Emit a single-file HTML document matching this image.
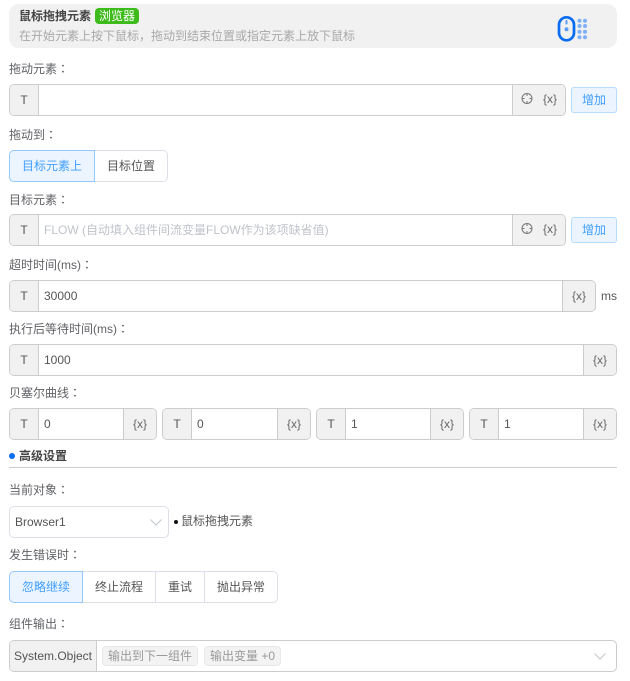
<!DOCTYPE html>
<html lang="zh">
<head>
<meta charset="utf-8">
<style>
html,body{margin:0;padding:0;background:#fff;}
body{width:630px;height:681px;position:relative;overflow:hidden;font-family:"Liberation Sans","Noto Sans CJK SC",sans-serif;font-size:12px;color:#606266;}
.a{position:absolute;box-sizing:border-box;white-space:nowrap;}
.lb{position:absolute;left:9px;height:18px;line-height:18px;font-size:12px;color:#606266;white-space:nowrap;}
.c{font-family:"Noto Sans CJK TC",sans-serif;}
.box{position:absolute;box-sizing:border-box;height:32px;border:1px solid #ccc;border-radius:5px;background:#fff;overflow:hidden;}
.t{position:absolute;left:0;top:0;bottom:0;width:28px;background:#f1f1f1;border-right:1px solid #ccc;text-align:center;line-height:30px;color:#555;font-size:12px;box-sizing:content-box;}
.v{position:absolute;left:34px;top:0;line-height:30px;font-size:12px;color:#555;white-space:nowrap;}
.x{position:absolute;right:0;top:0;bottom:0;background:#f1f1f1;border-left:1px solid #ccc;line-height:30px;font-size:12px;color:#666;text-align:center;box-sizing:border-box;width:33px;}
.seg{position:absolute;box-sizing:border-box;height:32px;border:1px solid #dcdfe6;background:#fff;text-align:center;line-height:30px;font-size:12px;color:#555;white-space:nowrap;}
.on{background:#ecf5ff;border-color:#94c7ff;color:#409eff;}
.add{position:absolute;box-sizing:border-box;left:571px;width:46px;height:26px;background:#ecf5ff;border:1px solid #b8dcff;border-radius:3px;color:#409eff;text-align:center;line-height:24px;font-size:12px;}
.tag{position:absolute;box-sizing:border-box;top:646px;height:20px;line-height:18px;background:#f3f3f3;border:1px solid #e9e9e9;border-radius:4px;color:#999;font-size:12px;text-align:center;white-space:nowrap;}
</style>
</head>
<body>
<div class="a" style="left:9px;top:4px;width:608px;height:44px;background:#f1f1f1;border-radius:10px;"></div>
<div class="a" style="left:19px;top:8px;line-height:16px;font-size:12px;font-weight:bold;color:#444;">鼠标拖拽元素</div>
<div class="a" style="left:95px;top:8px;width:44px;height:16px;background:#3dbb1b;border-radius:4px;color:#fff;font-size:12px;line-height:16px;text-align:center;">浏览器</div>
<div class="a" style="left:19px;top:28px;line-height:17px;font-size:12px;color:#a8a8a8;">在开始元素上按下鼠标，拖动到结束位置或指定元素上放下鼠标</div>
<svg class="a" style="left:556px;top:15px;" width="34" height="28" viewBox="0 0 34 28">
<rect x="3" y="2.300" width="15" height="23" rx="7.500" fill="none" stroke="#0a6cf0" stroke-width="2.700"/>
<rect x="9.500" y="5" width="2" height="4.500" rx="1" fill="#5b9bf5"/>
<circle cx="10.500" cy="14.300" r="2" fill="#5b9bf5"/>
<g fill="#7db0f7"><circle cx="23.500" cy="5.700" r="2"/><circle cx="29" cy="5.700" r="2"/><circle cx="23.500" cy="11" r="2"/><circle cx="29" cy="11" r="2"/><circle cx="23.500" cy="16.700" r="2"/><circle cx="29" cy="16.700" r="2"/><circle cx="23.500" cy="22.300" r="2"/><circle cx="29" cy="22.300" r="2"/></g>
</svg>

<div class="lb" style="top:60px;">拖动元素<span class="c" lang="zh-Hant">：</span></div>
<div class="box" style="left:9px;top:84px;width:557px;"><div class="t">T</div><div class="x" style="width:53px;"></div></div>
<svg class="a" style="left:520px;top:92px;" width="14" height="13" viewBox="0 0 14 13"><circle cx="7" cy="6.500" r="5" fill="none" stroke="#777" stroke-width="1"/><path d="M7 1.500V4M7 9V11.500M2 6.500H4.500M9.500 6.500H12" stroke="#777" stroke-width="1" fill="none"/></svg>
<div class="a" style="left:543px;top:91px;font-size:12px;line-height:16px;color:#666;">{x}</div>
<div class="add" style="top:87px;">增加</div>

<div class="lb" style="top:126px;">拖动到<span class="c" lang="zh-Hant">：</span></div>
<div class="seg on" style="left:9px;top:150px;width:86px;border-radius:5px 0 0 5px;">目标元素上</div>
<div class="seg" style="left:95px;top:150px;width:73px;border-left:0;border-radius:0 5px 5px 0;">目标位置</div>

<div class="lb" style="top:191px;">目标元素<span class="c" lang="zh-Hant">：</span></div>
<div class="box" style="left:9px;top:214px;width:557px;"><div class="t">T</div><div class="v" style="color:#bfc3ca;">FLOW (自动填入组件间流变量FLOW作为该项缺省值)</div><div class="x" style="width:53px;"></div></div>
<svg class="a" style="left:520px;top:222px;" width="14" height="13" viewBox="0 0 14 13"><circle cx="7" cy="6.500" r="5" fill="none" stroke="#777" stroke-width="1"/><path d="M7 1.500V4M7 9V11.500M2 6.500H4.500M9.500 6.500H12" stroke="#777" stroke-width="1" fill="none"/></svg>
<div class="a" style="left:543px;top:221px;font-size:12px;line-height:16px;color:#666;">{x}</div>
<div class="add" style="top:217px;">增加</div>

<div class="lb" style="top:256px;">超时时间(ms)<span class="c" lang="zh-Hant">：</span></div>
<div class="box" style="left:9px;top:280px;width:587px;"><div class="t">T</div><div class="v">30000</div><div class="x">{x}</div></div>
<div class="a" style="left:601px;top:287px;line-height:18px;font-size:12px;color:#555;">ms</div>

<div class="lb" style="top:320px;">执行后等待时间(ms)<span class="c" lang="zh-Hant">：</span></div>
<div class="box" style="left:9px;top:344px;width:608px;"><div class="t">T</div><div class="v">1000</div><div class="x">{x}</div></div>

<div class="lb" style="top:384px;">贝塞尔曲线<span class="c" lang="zh-Hant">：</span></div>
<div class="box" style="left:9px;top:408px;width:148px;"><div class="t">T</div><div class="v">0</div><div class="x">{x}</div></div>
<div class="box" style="left:162px;top:408px;width:149px;"><div class="t">T</div><div class="v">0</div><div class="x">{x}</div></div>
<div class="box" style="left:316px;top:408px;width:148px;"><div class="t">T</div><div class="v">1</div><div class="x">{x}</div></div>
<div class="box" style="left:469px;top:408px;width:148px;"><div class="t">T</div><div class="v">1</div><div class="x">{x}</div></div>

<div class="a" style="left:9px;top:453px;width:6px;height:6px;border-radius:50%;background:#0a6cf0;"></div>
<div class="a" style="left:19px;top:447px;line-height:18px;font-size:12px;font-weight:bold;color:#444;">高级设置</div>
<div class="a" style="left:9px;top:467px;width:608px;height:1px;background:#ccc;"></div>

<div class="lb" style="top:481px;">当前对象<span class="c" lang="zh-Hant">：</span></div>
<div class="a" style="left:9px;top:506px;width:160px;height:32px;border:1px solid #dcdfe6;border-radius:5px;background:#fff;"></div>
<div class="a" style="left:15px;top:514px;line-height:17px;font-size:12px;color:#555;">Browser1</div>
<svg class="a" style="left:149px;top:518px;" width="14" height="9" viewBox="0 0 14 9"><path d="M1.500 1.500L7 7L12.500 1.500" fill="none" stroke="#c0c4cc" stroke-width="1"/></svg>
<div class="a" style="left:174px;top:520px;width:4px;height:4px;border-radius:50%;background:#111;"></div>
<div class="a" style="left:181px;top:512px;line-height:18px;font-size:12px;color:#555;">鼠标拖拽元素</div>

<div class="lb" style="top:546px;">发生错误时<span class="c" lang="zh-Hant">：</span></div>
<div class="seg on" style="left:9px;top:571px;width:74px;border-radius:5px 0 0 5px;">忽略继续</div>
<div class="seg" style="left:83px;top:571px;width:73px;border-left:0;">终止流程</div>
<div class="seg" style="left:156px;top:571px;width:49px;border-left:0;">重试</div>
<div class="seg" style="left:205px;top:571px;width:73px;border-left:0;border-radius:0 5px 5px 0;">抛出异常</div>

<div class="lb" style="top:615px;">组件输出<span class="c" lang="zh-Hant">：</span></div>
<div class="box" style="left:9px;top:640px;width:608px;"><div class="t" style="width:86px;line-height:31px;">System.Object</div></div>
<div class="tag" style="left:102px;width:96px;">输出到下一组件</div>
<div class="tag" style="left:204px;width:77px;">输出变量 +0</div>
<svg class="a" style="left:593px;top:652px;" width="14" height="9" viewBox="0 0 14 9"><path d="M1.500 1.500L7 7L12.500 1.500" fill="none" stroke="#c0c4cc" stroke-width="1"/></svg>
</body>
</html>
